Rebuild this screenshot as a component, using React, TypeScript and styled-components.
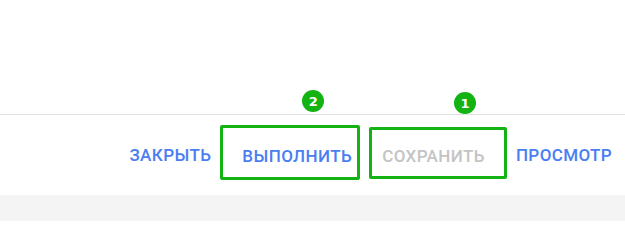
import React from "react";
import styled, { createGlobalStyle } from "styled-components";

const GlobalStyle = createGlobalStyle`
  html, body {
    margin: 0;
    padding: 0;
    background: #ffffff;
  }
  body {
    font-family: Roboto, "Liberation Sans", Arial, sans-serif;
  }
`;

const Page = styled.div`
  width: 625px;
  height: 221px;
  display: flex;
  flex-direction: column;
  background: #f4f4f4;
`;

const Content = styled.div`
  height: 114px;
  background: #ffffff;
`;

const Footer = styled.div`
  height: 80px;
  background: #ffffff;
  border-top: 1px solid #e0e0e0;
  display: flex;
  align-items: center;
  justify-content: flex-end;
  padding-right: 13px;
  gap: 9px;
`;

const ActionButton = styled.button<{ $disabled?: boolean }>`
  border: none;
  background: transparent;
  padding: 0;
  font-family: "Roboto Medium", Roboto, "Liberation Sans", Arial, sans-serif;
  font-weight: 500;
  font-size: 17px;
  letter-spacing: 0.4px;
  text-transform: uppercase;
  color: ${(p) => (p.$disabled ? "#c4c4c4" : "#4a7ef2")};
  cursor: ${(p) => (p.$disabled ? "default" : "pointer")};
  line-height: 20px;
`;

const Highlight = styled.div<{
  $pl: number;
  $pr: number;
  $pt: number;
  $h: number;
  $lift: number;
}>`
  position: relative;
  box-sizing: border-box;
  height: ${(p) => p.$h}px;
  margin-bottom: ${(p) => p.$lift}px;
  border: 3px solid #12b312;
  border-radius: 2px;
  display: flex;
  align-items: flex-start;
  padding: ${(p) => p.$pt}px ${(p) => p.$pr}px 0 ${(p) => p.$pl}px;
`;

const Badge = styled.span<{ $left: number; $top: number }>`
  position: absolute;
  left: ${(p) => p.$left}px;
  top: ${(p) => p.$top}px;
  width: 22px;
  height: 22px;
  border-radius: 50%;
  background: #12b312;
  color: #ffffff;
  font-family: "DejaVu Sans", sans-serif;
  font-weight: 700;
  font-size: 13px;
  display: flex;
  align-items: center;
  justify-content: center;
`;

export default function App() {
  return (
    <>
      <GlobalStyle />
      <Page>
        <Content />
        <Footer>
          <ActionButton>Закрыть</ActionButton>
          <Highlight $pl={19} $pr={5} $pt={18} $h={55} $lift={5}>
            <Badge $left={79} $top={-38}>2</Badge>
            <ActionButton>Выполнить</ActionButton>
          </Highlight>
          <Highlight $pl={10} $pr={19} $pt={16} $h={52} $lift={4}>
            <Badge $left={82} $top={-38}>1</Badge>
            <ActionButton $disabled>Сохранить</ActionButton>
          </Highlight>
          <ActionButton>Просмотр</ActionButton>
        </Footer>
      </Page>
    </>
  );
}
